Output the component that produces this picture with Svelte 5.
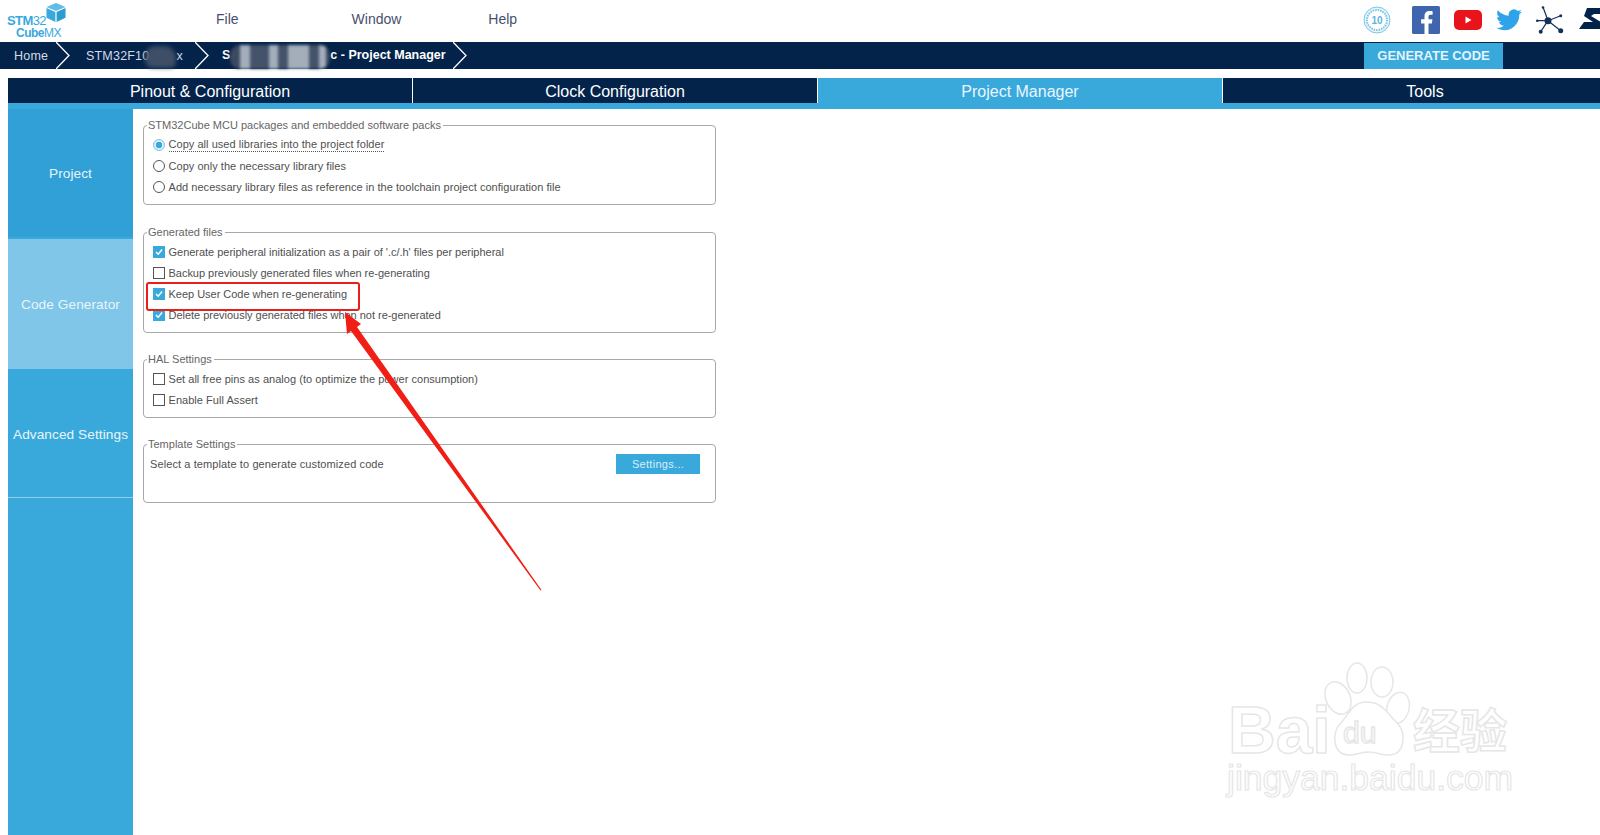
<script>
  const menus = ['File', 'Window', 'Help'];
  const tabs = ['Pinout & Configuration', 'Clock Configuration', 'Project Manager', 'Tools'];
  const sideItems = ['Project', 'Code Generator', 'Advanced Settings'];

  const packRows = [
    { label: 'Copy all used libraries into the project folder', checked: true, focus: true },
    { label: 'Copy only the necessary library files' },
    { label: 'Add necessary library files as reference in the toolchain project configuration file' }
  ];
  const fileRows = [
    { label: "Generate peripheral initialization as a pair of '.c/.h' files per peripheral", checked: true },
    { label: 'Backup previously generated files when re-generating' },
    { label: 'Keep User Code when re-generating', checked: true },
    { label: 'Delete previously generated files when not re-generated', checked: true }
  ];
  const halRows = [
    { label: 'Set all free pins as analog (to optimize the power consumption)' },
    { label: 'Enable Full Assert' }
  ];
</script>

{#snippet radio(row)}
  <div class="row">
    <span class="radio" class:on={row.checked}></span>
    <span class:focus={row.focus}>{row.label}</span>
  </div>
{/snippet}

{#snippet check(row)}
  <div class="row">
    <span class="box" class:on={row.checked}>
      {#if row.checked}
        <svg width="10" height="10" viewBox="0 0 11 11"><path d="M2.2 5.6 4.6 8 8.9 2.8" fill="none" stroke="#fff" stroke-width="1.6" /></svg>
      {/if}
    </span>
    <span>{row.label}</span>
  </div>
{/snippet}

<div class="app">
  <header class="top">
    <div class="logo">
      <div class="logo-text">
        <div class="l1"><b>STM</b>32</div>
        <div class="l2"><b>Cube</b>MX</div>
      </div>
      <svg class="cube" width="20" height="19" viewBox="0 0 20 19">
        <path d="M10 0 19.5 4 10 8 .5 4Z" fill="#5fbde6" />
        <path d="M.5 5 9.4 8.9V19L.5 14.8Z" fill="#39a9dc" />
        <path d="M19.5 5 10.6 8.9V19l8.9-4.2Z" fill="#2b9bd0" />
      </svg>
    </div>
    <nav class="menu">
      {#each menus as m}<span>{m}</span>{/each}
    </nav>
    <div class="icons">
      <svg class="badge" width="28" height="28" viewBox="0 0 28 28">
        <circle cx="14" cy="14" r="13" fill="#e6f4fb" stroke="#7cc6e8" stroke-width="1" />
        <circle cx="14" cy="14" r="10" fill="#fff" stroke="#7cc6e8" stroke-width="2" stroke-dasharray="1.5 1" />
        <text x="14" y="18" text-anchor="middle">10</text>
      </svg>
      <svg width="28" height="28" viewBox="0 0 28 28">
        <rect width="28" height="28" rx="1.5" fill="#3f65ae" />
        <path d="M19.5 28V17.4h3.4l.5-4.1h-3.9v-2.5c0-1.2.4-2 2-2h2.1V5.200c-.4 0-1.600-.2-3-.2-3 0-5.100 1.800-5.100 5.200v3.100h-3.400v4.100H15.500V28Z" fill="#fff" transform="translate(-3 0)" />
      </svg>
      <svg width="28" height="20" viewBox="0 0 28 20">
        <rect width="28" height="20" rx="5" fill="#e8131b" />
        <path d="M11.500 6.500 17.500 10 11.500 13.500Z" fill="#fff" />
      </svg>
      <svg width="26" height="22" viewBox="0 0 24 20.500">
        <path transform="translate(0 -2)" d="M23.953 4.57a10 10 0 01-2.825.775 4.958 4.958 0 002.163-2.723c-.951.555-2.005.959-3.127 1.184a4.92 4.92 0 00-8.384 4.482C7.69 8.095 4.067 6.13 1.64 3.162a4.822 4.822 0 00-.666 2.475c0 1.71.87 3.213 2.188 4.096a4.904 4.904 0 01-2.228-.616v.06a4.923 4.923 0 003.946 4.827 4.996 4.996 0 01-2.212.085 4.936 4.936 0 004.604 3.417 9.867 9.867 0 01-6.102 2.105c-.39 0-.779-.023-1.17-.067a13.995 13.995 0 007.557 2.209c9.053 0 13.998-7.496 13.998-13.985 0-.21 0-.42-.015-.63A9.935 9.935 0 0024 4.59z" fill="#2fa3ea" />
      </svg>
      <svg width="28" height="28" viewBox="0 0 28 28">
        <g stroke="#14305a" stroke-width="1.200">
          <path d="M12 14.700 7 1M12 14.700 .7 14.700M12 14.700 4.700 25.700M12 14.700 24.700 9.700M12 14.700 24.700 24.700" />
        </g>
        <g fill="#14305a">
          <circle cx="12" cy="14.700" r="3.500" />
          <circle cx="7" cy="1.500" r="1.300" />
          <circle cx="1.300" cy="14.700" r="1.300" />
          <circle cx="4.700" cy="25.700" r="2" />
          <circle cx="24.700" cy="9.700" r="1.500" />
          <circle cx="24.700" cy="24.700" r="2.500" />
        </g>
      </svg>
      <svg class="st" width="30" height="24" viewBox="0 0 30 24">
        <path d="M8 0H30V6H15L12 8 22 14V21H19L0 21 5 14H14L5 8Z" fill="#03234b" />
      </svg>
    </div>
  </header>

  <div class="crumbs">
    <span class="crumb c1">Home</span>
    <svg class="chev" width="14" height="27" viewBox="0 0 14 27"><path d="M0 0 13 13.500 0 27" /></svg>
    <span class="crumb c2">STM32F10<span class="smudge"></span>x</span>
    <svg class="chev" width="14" height="27" viewBox="0 0 14 27"><path d="M0 0 13 13.500 0 27" /></svg>
    <span class="crumb c3">S<span class="mosaic"></span>c - Project Manager</span>
    <svg class="chev" width="14" height="27" viewBox="0 0 14 27"><path d="M0 0 13 13.500 0 27" /></svg>
    <button class="generate">GENERATE CODE</button>
  </div>

  <div class="tabs">
    {#each tabs as t, i}
      <div class="tab" class:active={i === 2}>{t}</div>
    {/each}
  </div>

  <div class="body">
    <aside class="side">
      {#each sideItems as s, i}
        <div class="side-item" class:current={i === 1}>{s}</div>
      {/each}
    </aside>

    <main class="content">
      <fieldset class="f1">
        <legend>STM32Cube MCU packages and embedded software packs</legend>
        {#each packRows as r}{@render radio(r)}{/each}
      </fieldset>
      <fieldset class="f2">
        <legend>Generated files</legend>
        {#each fileRows as r}{@render check(r)}{/each}
      </fieldset>
      <fieldset class="f3">
        <legend>HAL Settings</legend>
        {#each halRows as r}{@render check(r)}{/each}
      </fieldset>
      <fieldset class="f4">
        <legend>Template Settings</legend>
        <div class="template">
          <span>Select a template to generate customized code</span>
          <button class="settings">Settings...</button>
        </div>
      </fieldset>
    </main>
  </div>

  <!-- annotation drawn over the screenshot, plus the watermark -->
  <svg class="overlay" width="1600" height="835" viewBox="0 0 1600 835">
    <rect x="147" y="283" width="212" height="27" rx="2" fill="none" stroke="#e8201c" stroke-width="2" />
    <path d="M345 312 361 324 357 327 541.500 590 540.500 590.500 351 331 347 334Z" fill="#f01e14" />
    <g class="mark">
      <text class="bai" x="1228" y="753">Bai</text>
      <ellipse cx="1338" cy="698" rx="12" ry="17" transform="rotate(-25 1338 698)" />
      <ellipse cx="1357" cy="678" rx="10" ry="15" />
      <ellipse cx="1382" cy="682" rx="11" ry="15" />
      <ellipse cx="1398" cy="708" rx="11" ry="16" transform="rotate(15 1398 708)" />
      <path d="M1366 702c-14 0-18 14-26 22-8 8-8 30 8 31 8 0 14-3 21-3s14 4 22 3c14-2 15-22 7-31-10-9-14-22-32-22Z" />
      <text class="du" x="1343" y="743">du</text>
      <text class="cn" x="1413" y="748">经验</text>
      <text class="url" x="1227" y="790">jingyan.baidu.com</text>
    </g>
  </svg>
</div>

<style>
  :global(body) {
    margin: 0;
    background: #fff;
  }

  .app {
    position: relative;
    width: 1600px;
    height: 835px;
    overflow: hidden;
    font-family: "Liberation Sans", Arial, sans-serif;
    display: flex;
    flex-direction: column;
  }

  .top {
    height: 42px;
    display: flex;
    align-items: flex-start;
    flex: none;
  }

  .logo {
    width: 66px;
    margin-left: 7px;
    height: 42px;
    display: flex;
    align-items: flex-start;
    color: #39a9dc;
  }

  .logo-text {
    width: 39px;
    margin-top: 14px;
    flex: none;
  }

  .l1 {
    font-size: 13px;
    line-height: 13px;
    white-space: nowrap;
    letter-spacing: -0.6px;
  }

  .l2 {
    font-size: 12px;
    line-height: 12px;
    margin-left: 9px;
    white-space: nowrap;
    letter-spacing: -0.5px;
  }

  .cube {
    margin-top: 3px;
    flex: none;
  }

  .menu {
    margin-left: 143px;
    display: flex;
    gap: 113px;
    padding-top: 11px;
    font-size: 14px;
    line-height: 16px;
    color: #47506e;
  }

  .menu span:nth-child(2) {
    margin-right: -26px;
  }

  .icons {
    margin-left: auto;
    display: flex;
    align-items: center;
    height: 40px;
    gap: 14px;
    margin-right: -9px;
    flex: none;
  }

  .badge {
    margin-right: 8px;
    transform: translateX(1px);
  }

  .badge text {
    font-size: 10px;
    font-weight: bold;
    fill: #5db5de;
  }

  .st {
    margin-left: 1px;
  }

  .crumbs {
    height: 27px;
    flex: none;
    background: #03234b;
    display: flex;
    align-items: center;
    color: #d5dce6;
    font-size: 12.500px;
  }

  .crumb {
    white-space: nowrap;
    letter-spacing: 0.2px;
  }

  .c1 {
    margin-left: 14px;
    width: 42px;
  }

  .c2 {
    margin-left: 16px;
    width: 109px;
  }

  .c3 {
    margin-left: 13px;
    width: 231px;
    color: #fff;
    font-weight: bold;
    letter-spacing: 0;
  }

  .chev {
    flex: none;
  }

  .chev path {
    fill: none;
    stroke: #fff;
    stroke-width: 1.300;
  }

  .smudge {
    display: inline-block;
    width: 31px;
    height: 22px;
    margin: -4px 0 -6px -4px;
    vertical-align: middle;
    background: #44536a;
    border-radius: 10px 12px 6px 8px;
    filter: blur(2px);
    opacity: 0.9;
  }

  .mosaic {
    display: inline-block;
    width: 100px;
    height: 24px;
    margin: -4px 0 -6px 0;
    vertical-align: middle;
    border-radius: 10px;
    filter: blur(1.500px);
    background: linear-gradient(90deg, #3b4a62 0 10px, #a4aebb 10px 20px, #44536a 20px 39px, #a4aebb 39px 48px, #44536a 48px 58px, #a4aebb 58px 79px, #44536a 79px 89px, #a4aebb 89px 96px, #3b4a62 96px);
  }

  .generate {
    margin-left: 897px;
    width: 139px;
    height: 26px;
    border: 0;
    padding: 0;
    background: #39a9dc;
    color: #e4f3fb;
    font: bold 13px "Liberation Sans", Arial, sans-serif;
  }

  .tabs {
    margin: 9px 0 0 8px;
    height: 31px;
    box-sizing: border-box;
    flex: none;
    display: flex;
    overflow: hidden;
    background: #03234b;
    border-bottom: 6px solid #39a9dc;
  }

  .tab {
    flex: 0 0 405px;
    box-sizing: border-box;
    line-height: 27px;
    height: 25px;
    text-align: center;
    font-size: 16px;
    color: #fff;
    border-right: 1px solid #fff;
  }

  .tab.active {
    background: #39a9dc;
    color: #eaf6fc;
  }

  .body {
    flex: 1;
    display: flex;
    margin-left: 8px;
    min-height: 0;
  }

  .side {
    width: 125px;
    flex: none;
    background: #39a9dc;
  }

  .side-item {
    height: 128px;
    display: flex;
    align-items: center;
    justify-content: center;
    box-sizing: border-box;
    color: #e8f5fb;
    font-size: 13.600px;
    letter-spacing: 0.1px;
  }

  .side-item:first-child {
    background: #31a0d6;
    margin-bottom: 2px;
  }

  .side-item.current {
    background: #7fc6e8;
    height: 130px;
  }

  .side-item:last-child {
    height: 129px;
    padding-top: 3px;
    border-bottom: 1px solid #8fd0ee;
  }

  .content {
    margin-left: 10px;
    padding-top: 9px;
    width: 573px;
    color: #505050;
    font-size: 11px;
  }

  fieldset {
    box-sizing: border-box;
    margin: 0 0 20px;
    padding: 2px 8px 0 9px;
    border: 1px solid #a8a8a8;
    border-radius: 4px;
    min-width: 0;
  }

  legend {
    padding: 0 2px 0 1px;
    margin-left: -6px;
    line-height: 14px;
    color: #666;
    font-size: 11px;
  }

  .f1 { height: 87px; padding-top: 2px; }
  .f2 { height: 108px; margin-bottom: 19px; padding-top: 2px; }
  .f3 { height: 66px; margin-bottom: 19px; }
  .f4 { height: 66px; padding-top: 3px; }

  .row {
    height: 21px;
    display: flex;
    align-items: center;
    gap: 3.500px;
    white-space: nowrap;
    letter-spacing: 0.04px;
  }

  .f2 .row {
    letter-spacing: -0.02px;
  }

  .focus {
    border-bottom: 1px dotted #555;
    line-height: 13px;
    margin-top: 1px;
  }

  .radio,
  .box {
    width: 10px;
    height: 10px;
    flex: none;
    display: block;
    border: 1px solid #555;
    background: #fff;
  }

  .radio {
    border-radius: 50%;
  }

  .radio.on {
    border-color: #7fc6e8;
    background: radial-gradient(circle, #39a9dc 0 3px, #d8eef9 3.500px);
  }

  .box.on {
    background: #39a9dc;
    border-color: #39a9dc;
  }

  .box svg {
    display: block;
  }

  .template {
    display: flex;
    justify-content: space-between;
    align-items: flex-start;
    height: 40px;
    margin-left: -3px;
    padding-right: 7px;
    letter-spacing: 0.1px;
    line-height: 21px;
  }

  .settings {
    width: 84px;
    height: 20px;
    border: 0;
    padding: 0;
    background: #39a9dc;
    color: #d8eef9;
    font: 11px "Liberation Sans", Arial, sans-serif;
    letter-spacing: 0.3px;
  }

  .overlay {
    position: absolute;
    left: 0;
    top: 0;
    pointer-events: none;
  }

  .mark {
    fill: #fff;
    stroke: #e6e6e6;
    stroke-width: 1.500;
  }

  .mark text {
    font-family: "Liberation Sans", "Noto Sans CJK SC", sans-serif;
  }

  .bai {
    font-size: 66px;
    font-weight: bold;
  }

  .du {
    font-size: 30px;
  }

  .cn {
    font-size: 47px;
    font-weight: bold;
  }

  .url {
    font-size: 35.500px;
    stroke-width: 1.200px;
  }
</style>
